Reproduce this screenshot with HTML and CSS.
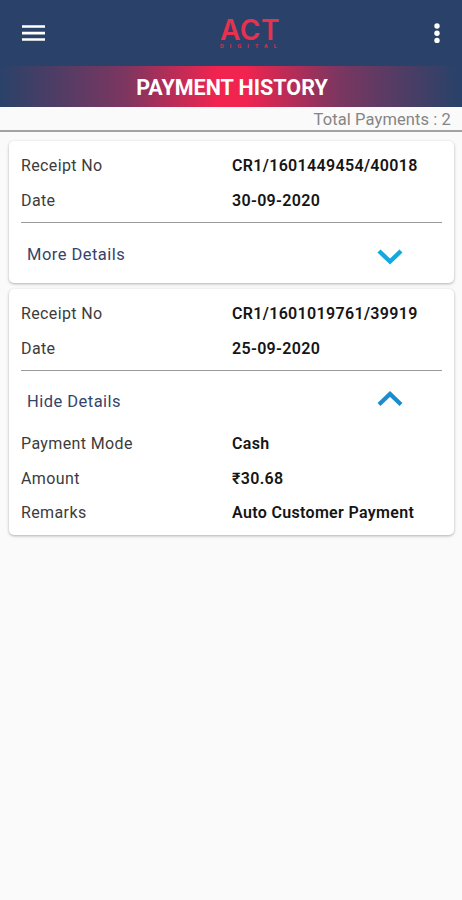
FILE: index.html
```html
<!doctype html>
<html lang="en">
  <head>
    <meta charset="utf-8">
    <title>Payment History</title>
    <meta name="viewport" content="width=device-width">
    <link rel="stylesheet" href="styles.css">
  </head>
  <body>

    <header class="topbar">
      <svg class="menu" width="23" height="17" viewBox="0 0 23 17">
        <path d="M0 1.5h23M0 8.1h23M0 14.5h23" stroke="#fff" stroke-width="2.6"/>
      </svg>
      <div class="logo">
        <span class="logo-name">ACT</span>
        <span class="logo-sub">DIGITAL</span>
      </div>
      <svg class="more" width="6" height="22" viewBox="0 0 6 22" fill="#fff">
        <circle cx="3" cy="3" r="2.7"/>
        <circle cx="3" cy="10.3" r="2.7"/>
        <circle cx="3" cy="17.4" r="2.7"/>
      </svg>
    </header>

    <h1 class="banner">PAYMENT HISTORY</h1>
    <div class="total">Total Payments : 2</div>

    <main class="payments">
      <section class="card">
        <dl>
          <dt>Receipt No</dt><dd>CR1/1601449454/40018</dd>
          <dt>Date</dt><dd>30-09-2020</dd>
        </dl>
        <div class="toggle">
          <span>More Details</span>
          <svg class="down" width="26" height="18" viewBox="0 0 26 18">
            <path d="M2 3l11 10.5L24 3" fill="none" stroke="#12a9e0" stroke-width="4.4"/>
          </svg>
        </div>
      </section>

      <section class="card open">
        <dl>
          <dt>Receipt No</dt><dd>CR1/1601019761/39919</dd>
          <dt>Date</dt><dd>25-09-2020</dd>
        </dl>
        <div class="toggle">
          <span>Hide Details</span>
          <svg class="up" width="26" height="18" viewBox="0 0 26 18">
            <path d="M2 14.5L13 4l11 10.5" fill="none" stroke="#1c8ccf" stroke-width="4.2"/>
          </svg>
        </div>
        <dl>
          <dt>Payment Mode</dt><dd>Cash</dd>
          <dt>Amount</dt><dd>₹30.68</dd>
          <dt>Remarks</dt><dd>Auto Customer Payment</dd>
        </dl>
      </section>
    </main>

  </body>
</html>
```

FILE: styles.css
```css
* {
  box-sizing: border-box;
}
body {
  margin: 0;
  min-height: 100vh;
  background: #fafafa;
  color: #333;
  font: 16px/20px Roboto, sans-serif;
}

.topbar {
  display: flex;
  justify-content: space-between;
  height: 66px;
  padding: 0 22px;
  background: #2a4269;
}
.menu {
  margin-top: 25px;
}
.more {
  margin-top: 23px;
}
.logo {
  display: flex;
  flex-direction: column;
  width: 62px;
  margin: 17px 0 0 23px;
  color: #e8314f;
  font-family: Inter, sans-serif;
}
.logo-name {
  font-size: 28px;
  font-weight: 600;
  line-height: 26px;
  letter-spacing: 0.6px;
}
.logo-sub {
  margin-top: 1px;
  font-size: 5px;
  font-weight: 600;
  line-height: 5px;
  letter-spacing: 6.2px;
}

.banner {
  height: 41px;
  margin: 0;
  padding-left: 2px;
  background: linear-gradient(90deg, #2a4269 0%, #7c3660 27%, #f0244f 47%, #f0244f 53%, #7c3660 73%, #2a4269 99%);
  color: #fff;
  font-size: 21.5px;
  font-weight: 700;
  line-height: 43px;
  text-align: center;
}
.total {
  height: 25px;
  padding-right: 11px;
  border-bottom: 2px solid #a2a2a2;
  color: #858585;
  font-size: 16.5px;
  line-height: 25px;
  letter-spacing: 0.1px;
  text-align: right;
}

.payments {
  display: flex;
  flex-direction: column;
  gap: 6px;
  padding: 9px 8px 0 9px;
}
.card {
  height: 142px;
  padding: 7px 12px 0;
  border-radius: 5px;
  background: #fff;
  box-shadow: 0 1px 3px rgba(0, 0, 0, 0.3);
}
.card.open {
  height: 246px;
}
dl {
  display: grid;
  grid-template-columns: 211px 1fr;
  grid-auto-rows: 34.5px;
  margin: 0;
  line-height: 35px;
}
dt {
  color: #3c3c3c;
  letter-spacing: 0.38px;
}
dd {
  margin: 0;
  color: #151515;
  font-weight: 600;
  letter-spacing: 0.33px;
  white-space: nowrap;
}

.toggle {
  display: flex;
  justify-content: space-between;
  height: 56px;
  margin-top: 5px;
  padding: 0 39px 0 6px;
  border-top: 1px solid #999;
  color: #35446b;
  font-size: 16.5px;
  line-height: 63px;
  letter-spacing: 0.47px;
}
.open .toggle {
  line-height: 62px;
}
.down {
  margin-top: 25px;
}
.up {
  margin-top: 19px;
}
```
